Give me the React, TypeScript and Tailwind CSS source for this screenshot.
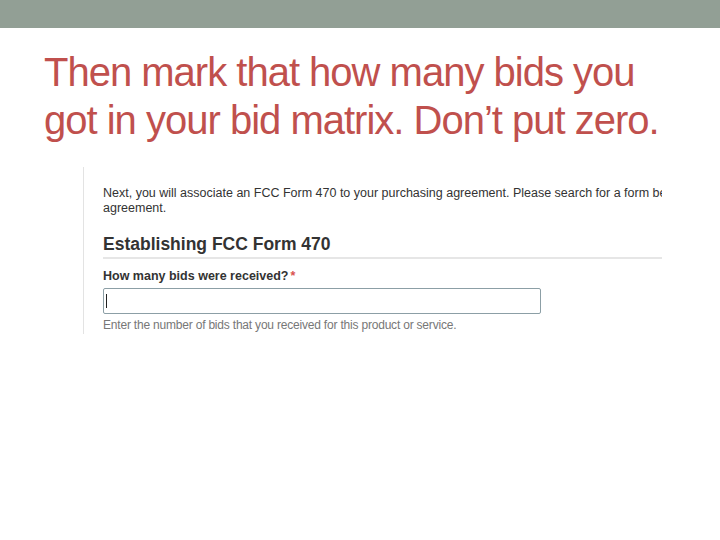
export default function App() {
  return (
    <div className="w-[720px] h-[540px] bg-white overflow-hidden" style={{ fontFamily: '"Liberation Sans", Arial, sans-serif' }}>
      {/* Top band */}
      <div className="h-[28px] bg-[#929f95]" />

      {/* Slide title */}
      <h1 className="pl-[44px] pt-[20px] text-[40px] leading-[48px] text-[#c0504d] tracking-[-1px]">
        Then mark that how many bids you
        <br />
        got in your bid matrix. Don’t put zero.
      </h1>

      {/* Screenshot of the form, cropped at its right edge */}
      <div className="mt-[23px] ml-[83px] w-[579px] h-[167px] border-l border-[#e3e3e3] overflow-hidden">
        <div className="pl-[19px] pt-[19px] w-[800px] text-[#333333]">
          <p className="text-[12.5px] leading-[15px] w-[700px]">
            Next, you will associate an FCC Form 470 to your purchasing agreement. Please search for a form below to add to this
            agreement.
          </p>
        </div>
        <div className="pl-[19px] pt-[18px] text-[#333333]">
          <h2 className="text-[17.5px] leading-[20px] font-bold pb-[3px] border-b-2 border-[#e6e6e6]">Establishing FCC Form 470</h2>
          <label className="block mt-[10px] text-[12.5px] leading-[15px] font-bold">
            How many bids were received?<span className="text-[#d9534f] ml-[2px]">*</span>
          </label>
          <div className="mt-[4px] w-[438px] h-[26px] border border-[#8c9fa6] rounded-[2px] flex items-center pl-[2px]">
            <div className="w-px h-[14px] bg-[#222222]" />
          </div>
          <p className="mt-[4px] text-[12px] leading-[15px] text-[#777777] tracking-[-0.2px]">
            Enter the number of bids that you received for this product or service.
          </p>
        </div>
      </div>
    </div>
  );
}
